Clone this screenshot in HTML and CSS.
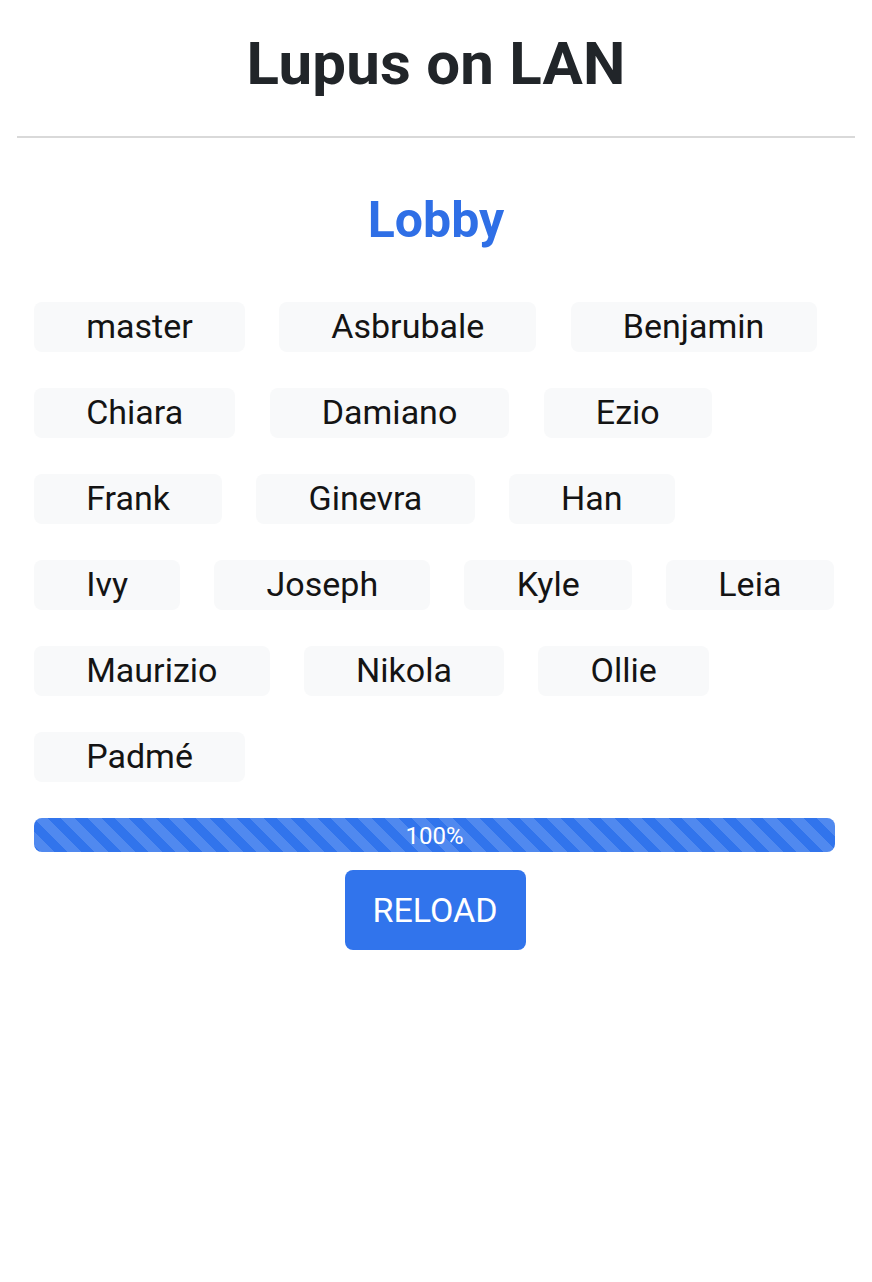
FILE: index.html
```html
<!DOCTYPE html>
<html lang="it">
<head>
<meta charset="utf-8">
<title>Lupus on LAN</title>
<link rel="stylesheet" href="styles.css">
</head>
<body>
<header class="header">
  <h1 class="title">Lupus on LAN</h1>
</header>
<hr class="divider">
<main class="lobby">
  <h2 class="lobby-title">Lobby</h2>
  <ul class="players">
    <li class="player">master</li>
    <li class="player">Asbrubale</li>
    <li class="player">Benjamin</li>
    <li class="player">Chiara</li>
    <li class="player">Damiano</li>
    <li class="player">Ezio</li>
    <li class="player">Frank</li>
    <li class="player">Ginevra</li>
    <li class="player">Han</li>
    <li class="player">Ivy</li>
    <li class="player">Joseph</li>
    <li class="player">Kyle</li>
    <li class="player">Leia</li>
    <li class="player">Maurizio</li>
    <li class="player">Nikola</li>
    <li class="player">Ollie</li>
    <li class="player">Padmé</li>
  </ul>
  <div class="progress">
    <div class="progress-bar" style="width: 100%">100%</div>
  </div>
  <div class="actions">
    <button class="btn-reload" type="button">RELOAD</button>
  </div>
</main>
</body>
</html>
```

FILE: styles.css
```css
* { box-sizing: border-box; }

html, body {
  margin: 0;
  padding: 0;
  background: #ffffff;
  font-family: Roboto, "Liberation Sans", Arial, sans-serif;
  color: #212529;
}

.header {
  padding-top: 28px;
  text-align: center;
}

.title {
  margin: 0;
  font-size: 60px;
  line-height: 72px;
  font-weight: 700;
  color: #212529;
  letter-spacing: 0.2px;
}

.divider {
  margin: 36px 17px 0 17px;
  border: 0;
  border-top: 2px solid #d9d9d9;
  height: 0;
}

.lobby {
  padding: 0 34px;
}

.lobby-title {
  margin: 52px 0 0 0;
  text-align: center;
  font-size: 50px;
  line-height: 60px;
  font-weight: 700;
  color: #2f6fe6;
}

.players {
  list-style: none;
  margin: 52px 0 0 0;
  padding: 0;
  display: flex;
  flex-wrap: wrap;
  column-gap: 34.2px;
  row-gap: 36px;
}

.player {
  background: #f8f9fa;
  border-radius: 8px;
  height: 50px;
  padding: 0 52.2px;
  font-size: 34px;
  line-height: 49px;
  color: #141414;
}

.progress {
  margin-top: 36px;
  height: 34px;
  width: 801px;
  border-radius: 8px;
  overflow: hidden;
  background: #e9ecef;
  display: flex;
}

.progress-bar {
  height: 100%;
  background-color: #3174ec;
  background-image: linear-gradient(45deg,
    rgba(255,255,255,.15) 25%, transparent 25%,
    transparent 50%, rgba(255,255,255,.15) 50%,
    rgba(255,255,255,.15) 75%, transparent 75%, transparent);
  background-size: 27px 27px;
  color: #ffffff;
  font-size: 24px;
  line-height: 36px;
  text-align: center;
}

.actions {
  display: flex;
  justify-content: center;
  margin-top: 18px;
  padding-right: 2px;
}

.btn-reload {
  width: 181px;
  height: 80px;
  border: 0;
  border-radius: 8px;
  background: #3174ec;
  color: #ffffff;
  font-family: Roboto, "Liberation Sans", Arial, sans-serif;
  font-size: 34px;
  line-height: 80px;
  padding: 0;
}
```
